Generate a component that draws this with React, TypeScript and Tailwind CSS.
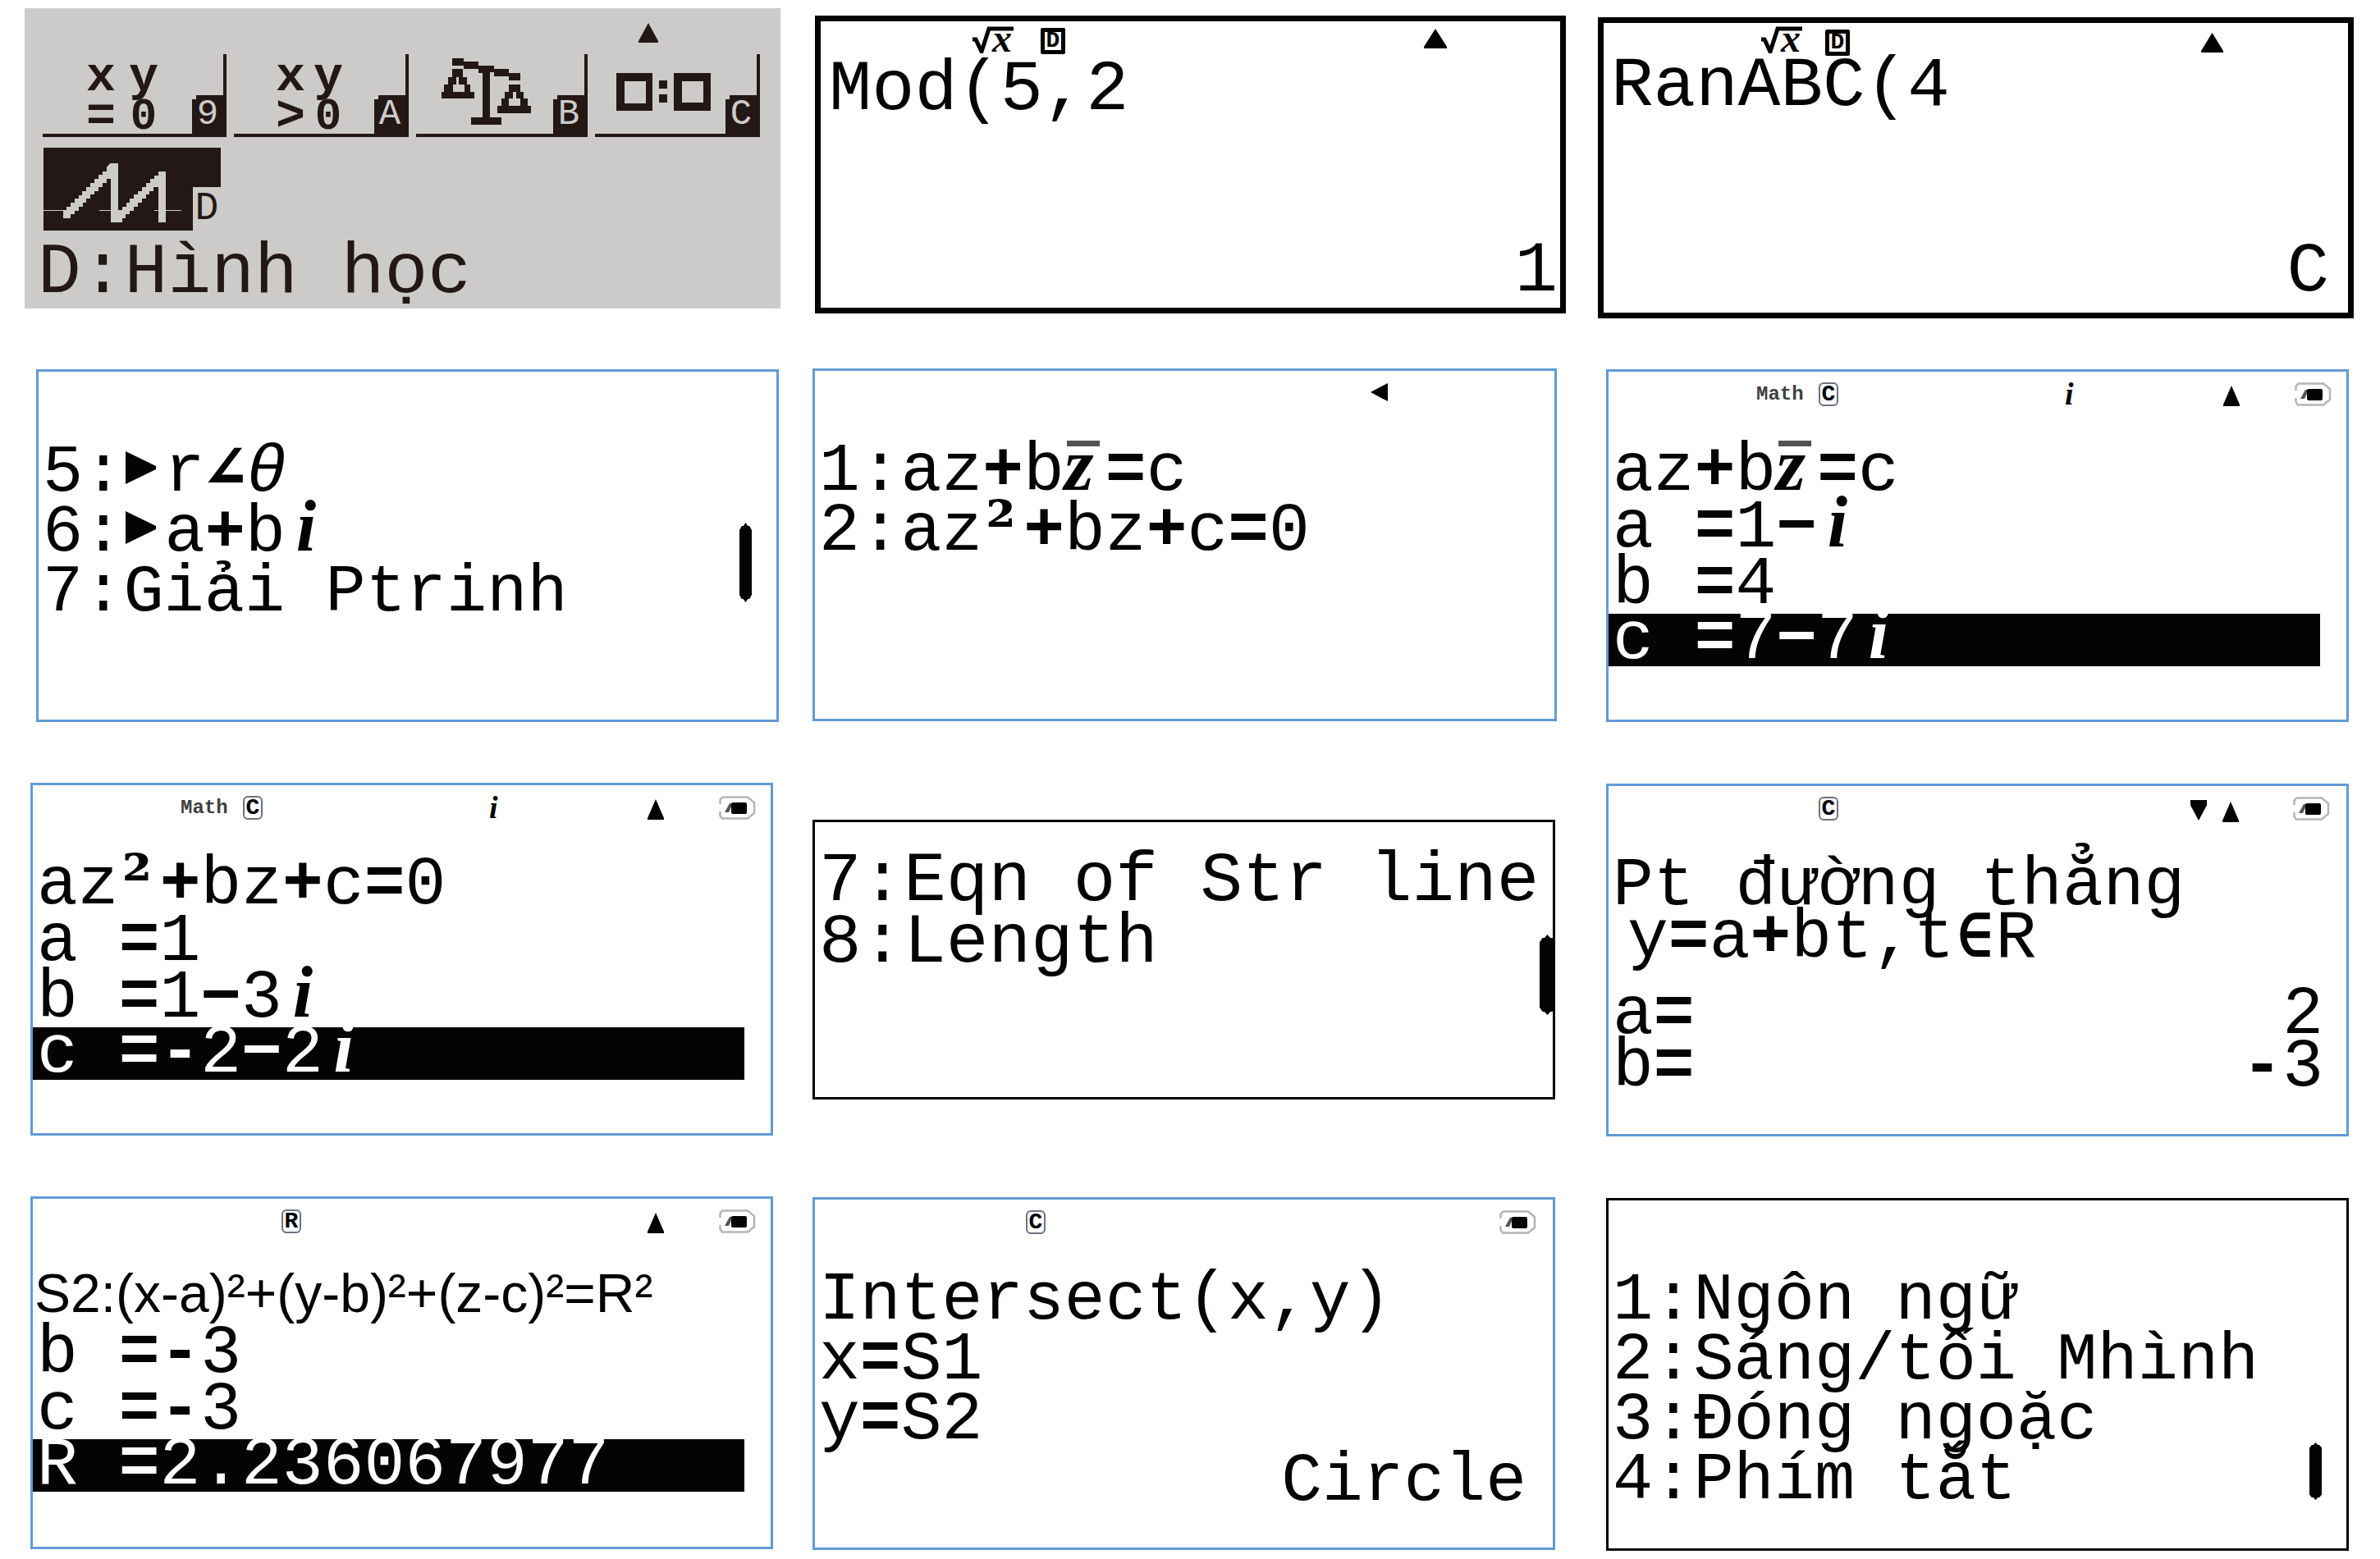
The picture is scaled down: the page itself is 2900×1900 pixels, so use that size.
import type { ReactNode } from "react";

const MONO = "font-['Liberation_Mono','DejaVu_Sans_Mono',monospace]";

function Up({ className = "h-[25px] w-[20px]" }: { className?: string }) {
  return (
    <svg viewBox="0 0 22 24" preserveAspectRatio="none" className={className} fill="currentColor" aria-hidden="true">
      <path d="M11 0 L22 22 V24 H0 V22 Z" />
    </svg>
  );
}

function Down() {
  return (
    <svg viewBox="0 0 22 24" preserveAspectRatio="none" className="h-[25px] w-[20px]" fill="currentColor" aria-hidden="true">
      <path d="M0 0 H22 V6 L11 24 L0 6 Z" />
    </svg>
  );
}

function Root() {
  return (
    <span className="flex h-[34px] w-[51px] items-end">
      <svg viewBox="0 0 51 33" className="absolute h-[33px] w-[51px] self-start" fill="none" stroke="currentColor" aria-hidden="true">
        <path d="M1 16 L5 16 L12 31 L21 3 H51" strokeWidth="5" />
      </svg>
      <span className="ml-[25px] font-['Liberation_Serif',serif] text-[48px] leading-[38px] font-bold italic">x</span>
    </span>
  );
}

function Mode({ className, children }: { className: string; children: string }) {
  return (
    <span className={`flex h-[32px] w-[30px] items-center justify-center rounded-[2px] border-[5px] border-black bg-white font-['Liberation_Mono',monospace] text-[28px] leading-[22px] font-bold text-black ${className}`}>
      {children}
    </span>
  );
}

function SmallMode({ children }: { children: string }) {
  return (
    <span className="flex h-[29px] w-[24px] items-center justify-center rounded-[6px] border-2 border-gray-500 font-['Liberation_Mono',monospace] text-[28px] leading-[26px] font-bold text-black">
      {children}
    </span>
  );
}

function Battery() {
  return (
    <svg viewBox="0 0 45 29" className="h-[29px] w-[45px]" aria-hidden="true">
      <path d="M4 1.5 H35 L43 8 V21 L35 27.5 H4 L1.5 24 V19 M1.5 10 V5 L4 1.5" fill="none" stroke="#b5b5b5" strokeWidth="2.5" />
      <path d="M7 20 L13 9 H17 L12 20 Z" fill="#555" />
      <rect x="15" y="8" width="19" height="14" rx="2" fill="#060304" />
    </svg>
  );
}

function Imag() {
  return <span className="inline-block w-[50px] text-center font-['Liberation_Serif',serif] text-[88px] leading-[40px] font-bold italic">i</span>;
}

function Play() {
  return (
    <svg viewBox="0 0 50 40" className="inline-block h-[40px] w-[50px] align-[8px]" fill="currentColor" aria-hidden="true">
      <path d="M3 0 L40 18 V22 L3 40 Z" />
    </svg>
  );
}

function ZBar() {
  return (
    <span className="relative inline-block w-[50px] font-['Liberation_Serif',serif] text-[92px] leading-[40px] font-bold italic">
      z<span className="absolute top-[-9px] left-[3px] h-[7px] w-[40px] bg-neutral-600" />
    </span>
  );
}

/* Operators and superscripts are heavier than letters on the display. */
function Ops({ t }: { t: string }) {
  return (
    <>
      {t.split(/([=+−-]+|²)/).map((s, i) => {
        if (s === "²") {
          return (
            <b key={i} className="inline-block w-[50px] pl-[4px] font-['DejaVu_Serif',serif] leading-[40px]">
              {s}
            </b>
          );
        }
        return i % 2 ? <b key={i}>{s}</b> : s;
      })}
    </>
  );
}

function Row({ children, className = "h-[73px] leading-[73px]" }: { children: ReactNode; className?: string }) {
  return <p className={`px-[5px] whitespace-pre ${className}`}>{children}</p>;
}

function Selected({ children }: { children: ReactNode }) {
  return <p className="mr-[32px] h-[64px] bg-[#060304] px-[5px] leading-[64px] whitespace-pre text-white">{children}</p>;
}

function Screen({ children, className = "" }: { children: ReactNode; className?: string }) {
  return <section className={`relative ${MONO} flex flex-col bg-white text-[#060304] ${className}`}>{children}</section>;
}

const BLUE = "min-h-[430px] border-[3px] border-[#629bd5]";
const MID = "h-[69px] leading-[69px]";

function Status({ children, className = "h-[60px] items-center" }: { children?: ReactNode; className?: string }) {
  return <div className={`flex w-full shrink-0 ${className}`}>{children}</div>;
}

function MathStatus() {
  return (
    <Status className="h-[88px] items-start pt-[13px] pl-[180px]">
      <span className="w-[58px] font-['Liberation_Mono',monospace] text-[24px] leading-[29px] font-bold text-neutral-700">Math</span>
      <span className="ml-[18px]"><SmallMode>C</SmallMode></span>
      <span className="ml-[276px] w-[15px] font-['Liberation_Serif',serif] text-[38px] leading-[29px] font-bold italic">i</span>
      <Up className="mt-[4px] ml-[178px] h-[25px] w-[20px]" />
      <span className="ml-[67px]"><Battery /></span>
    </Status>
  );
}

function Thumb({ className }: { className: string }) {
  return (
    <svg viewBox="0 0 16 96" preserveAspectRatio="none" className={`absolute ${className}`} fill="currentColor" aria-hidden="true">
      <path d="M8 0 L11 4 H13 L16 9 V87 L13 92 H11 L8 96 L5 92 H3 L0 87 V9 L3 4 H5 Z" />
    </svg>
  );
}

function Tile({ badge, className, children }: { badge: string; className: string; children: ReactNode }) {
  return (
    <button type="button" className={`relative h-[101px] border-r-[4px] border-b-[4px] border-[#231815] text-left ${className}`}>
      {children}
      <span className="absolute right-0 bottom-0 flex h-[47px] w-[38px] items-center justify-center bg-[#231815] text-[44px] leading-[47px] text-[#cccbc9]">
        {badge}
        <span className="absolute top-0 left-0 h-[5px] w-[5px] bg-[#cccbc9]" />
      </span>
    </button>
  );
}

function Formula({ sign, className }: { sign: string; className: string }) {
  return (
    <span className={`grid grid-cols-2 text-center text-[60px] leading-[56px] font-bold ${className}`}>
      <span>x</span>
      <span>y</span>
      <span className="leading-[41px]">{sign}</span>
      <span className="text-[54px] leading-[41px]">0</span>
    </span>
  );
}

function MenuScreen() {
  return (
    <Screen className="min-h-[366px] bg-[#cccbc9]! text-[#231815]">
      <Status className="h-[56px] items-center pl-[748px]">
        <Up className="mt-[4px] h-[24px] w-[24px]" />
      </Status>
      <div className="flex gap-[9px] pl-[22px]">
        <Tile badge="9" className="w-[224px]">
          <Formula sign="=" className="ml-[45px] w-[104px]" />
        </Tile>
        <Tile badge="A" className="w-[213px]">
          <Formula sign=">" className="ml-[46px] w-[92px]" />
        </Tile>
        <Tile badge="B" className="w-[209px]">
          <svg viewBox="820 198 333 294" preserveAspectRatio="none" className="absolute inset-0 h-full w-full" fill="currentColor" shapeRendering="crispEdges" aria-hidden="true">
            <path d="M892 213h23v12h29v15h30v12h30v15h22v27h-22v-15h-29v-13h-8v166h22v27h-60v-27h23V267h-8v-15h-29v-12h-23z" />
            <path fillRule="evenodd" d="M891 252h22v30h8v27h7v27h8v27h-66v-27h6v-27h8v-27h7zM899 282v27h-6v27h23v-27h-11v-27z" />
            <path fillRule="evenodd" d="M1004 309h22v27h7v27h8v27h6v27h-66v-27h8v-27h7v-27h8zM1011 336v27h-7v27h22v-27h-8v-27z" />
          </svg>
        </Tile>
        <Tile badge="C" className="w-[201px]">
          <svg viewBox="1174 198 320 294" preserveAspectRatio="none" className="absolute inset-0 h-full w-full" fill="currentColor" shapeRendering="crispEdges" aria-hidden="true">
            <path fillRule="evenodd" d="M1216 267h72v141h-72zM1232 297v84h42v-84zM1330 267h73v141h-73zM1346 297v81h43v-81z" />
            <path d="M1301 294h16v30h-16zM1301 348h16v30h-16z" />
          </svg>
        </Tile>
      </div>
      <button type="button" className="relative mt-[13px] ml-[23px] h-[101px] w-[216px] bg-[#231815]">
        <svg viewBox="86 540 349 303" preserveAspectRatio="none" className="absolute inset-0 h-full w-full" fill="#cccbc9" shapeRendering="crispEdges" aria-hidden="true">
          <path d="M86 768h40v3h-40zM196 768h45v3h-45zM304 768h53v3h-53z" />
          <path d="M218 597h15v171h8v-13h8v-14h7v-16h8v-14h8v-13h8v-14h8v-15h8v-15h8v-13h8v-14h15v186h-15V684h-10v15h-8v13h-6v14h-8v15h-8v15h-8v14h-8v14h-8v14h-7v15h-23V654h-8v16h-8v14h-8v15h-8v13h-8v14h-8v15h-7v15h-8v14h-7v13h-8v15h-15v-30h7v-13h8v-14h8v-15h8v-13h6v-14h8v-16h8v-14h8v-14h8v-15h8v-14h8v-16z" />
        </svg>
        <span className="absolute right-0 bottom-0 flex h-[53px] w-[34px] items-center justify-center bg-[#cccbc9] text-[48px] leading-[53px] text-[#231815]">D</span>
      </button>
      <p className="mt-[9px] pl-[16px] text-[88px] leading-[86px]">D:Hình học</p>
    </Screen>
  );
}

export default function App() {
  return (
    <main className="grid min-h-screen w-full grid-cols-[97fr_96fr_97fr] bg-white pb-[10px]">
      <div className="h-[430px] pt-[10px] pr-[19px] pl-[30px]">
        <MenuScreen />
      </div>

      <div className="pt-[19px] pr-[22px] pl-[23px]">
        <Screen className="min-h-[363px] border-[7px] border-[#060304] text-[87px]">
          <Status className="h-[44px] items-start pt-[6px] pl-[184px]">
            <Root />
            <Mode className="mt-[2px] ml-[33px]">D</Mode>
            <Up className="mt-[3px] ml-[437px] h-[24px] w-[28px]" />
          </Status>
          <p className="pl-[10px] leading-[80px]">Mod(5,2</p>
          <p className="mt-auto mb-[4px] pr-[3px] text-right leading-[80px]">1</p>
        </Screen>
      </div>

      <div className="pt-[21px] pr-[32px] pl-[17px]">
        <Screen className="min-h-[367px] border-[7px] border-[#060304] text-[86px]">
          <Status className="h-[37px] items-start pt-[4px] pl-[191px]">
            <Root />
            <Mode className="mt-[4px] ml-[28px]">D</Mode>
            <Up className="mt-[8px] ml-[428px] h-[24px] w-[27px]" />
          </Status>
          <p className="pl-[9px] leading-[80px]">RanABC(4</p>
          <p className="mt-auto mb-[10px] pr-[23px] text-right leading-[80px]">C</p>
        </Screen>
      </div>

      <div className="h-[500px] pt-[20px] pr-[21px] pl-[44px]">
        <Screen className={`${BLUE} pt-[87px] text-[82px]`}>
          <Row>
            5:<Play />r<span className="inline-block w-[50px] text-center font-['DejaVu_Sans_Mono',monospace] leading-[40px] font-bold">∠</span>
            <span className="italic">θ</span>
          </Row>
          <Row>6:<Play /><Ops t="a+b" /><Imag /></Row>
          <Row>7:Giải Ptrinh</Row>
          <Thumb className="top-[184px] right-[30px] h-[97px] w-[15px]" />
        </Screen>
      </div>

      <div className="pt-[19px] pr-[33px] pl-[20px]">
        <Screen className={`${BLUE} text-[83px]`}>
          <Status className="h-[87px] items-start pt-[15px] pl-[677px]">
            <svg viewBox="0 0 21 22" className="h-[22px] w-[21px]" fill="currentColor" aria-hidden="true">
              <path d="M21 0 V22 L13 18 L0 11 L13 4 Z" />
            </svg>
          </Status>
          <Row><Ops t="1:az+b" /><ZBar /><Ops t="=c" /></Row>
          <Row><Ops t="2:az²+bz+c=0" /></Row>
        </Screen>
      </div>

      <div className="pt-[20px] pr-[38px] pl-[27px]">
        <Screen className={`${BLUE} text-[83px]`}>
          <MathStatus />
          <Row className={MID}><Ops t="az+b" /><ZBar /><Ops t="=c" /></Row>
          <Row className={MID}><Ops t="a =1−" /><Imag /></Row>
          <Row className={MID}><Ops t="b =4" /></Row>
          <Selected><Ops t="c =7−7" /><Imag /></Selected>
        </Screen>
      </div>

      <div className="h-[500px] pt-[24px] pr-[28px] pl-[37px]">
        <Screen className={`${BLUE} text-[83px]`}>
          <MathStatus />
          <Row className={MID}><Ops t="az²+bz+c=0" /></Row>
          <Row className={MID}><Ops t="a =1" /></Row>
          <Row className={MID}><Ops t="b =1−3" /><Imag /></Row>
          <Selected><Ops t="c =-2−2" /><Imag /></Selected>
        </Screen>
      </div>

      <div className="pt-[69px] pr-[35px] pl-[20px]">
        <Screen className="min-h-[341px] border-[3px] border-[#060304] pt-[35px] text-[86px]">
          <Row className="leading-[75px]">7:Eqn of Str line</Row>
          <Row className="leading-[75px]">8:Length</Row>
          <Thumb className="top-[137px] right-[-3px] h-[98px] w-[19px]" />
        </Screen>
      </div>

      <div className="pt-[25px] pr-[38px] pl-[27px]">
        <Screen className={`${BLUE} text-[83px]`}>
          <Status className="h-[90px] items-start pt-[13px] pl-[256px]">
            <SmallMode>C</SmallMode>
            <span className="ml-[429px] pt-[4px]"><Down /></span>
            <Up className="mt-[6px] ml-[19px] h-[25px] w-[20px]" />
            <span className="ml-[66px]"><Battery /></span>
          </Status>
          <Row className="h-[64px] leading-[64px]">Pt đường thẳng</Row>
          <Row className="h-[64px] pl-[23px] leading-[64px]">
            <Ops t="y=a+bt,t" />
            <span className="inline-block w-[50px] text-center font-['DejaVu_Sans_Mono',monospace] text-[72px] leading-[40px] font-bold">∈</span>R
          </Row>
          <dl className="mt-[29px] pr-[28px] pl-[5px] leading-[64px]">
            <div className="flex h-[64px] justify-between"><dt><Ops t="a=" /></dt><dd>2</dd></div>
            <div className="flex h-[64px] justify-between"><dt><Ops t="b=" /></dt><dd><Ops t="-3" /></dd></div>
          </dl>
        </Screen>
      </div>

      <div className="pt-[28px] pr-[28px] pl-[37px]">
        <Screen className={`${BLUE} text-[83px]`}>
          <Status className="h-[75px] items-start pt-[13px] pl-[303px]">
            <SmallMode>R</SmallMode>
            <Up className="mt-[4px] ml-[422px] h-[25px] w-[20px]" />
            <span className="ml-[67px]"><Battery /></span>
          </Status>
          <p className="h-[80px] pl-[2px] font-['Liberation_Sans',sans-serif] text-[66px] leading-[80px] whitespace-pre">S2:(x-a)²+(y-b)²+(z-c)²=R²</p>
          <Row className={MID}><Ops t="b =-3" /></Row>
          <Row className={MID}><Ops t="c =-3" /></Row>
          <Selected><Ops t="R =2.236067977" /></Selected>
        </Screen>
      </div>

      <div className="pt-[29px] pr-[35px] pl-[20px]">
        <Screen className={`${BLUE} text-[83px]`}>
          <Status className="h-[87px] items-start pt-[13px] pl-[257px]">
            <SmallMode>C</SmallMode>
            <span className="ml-[553px]"><Battery /></span>
          </Status>
          <Row>Intersect(x,y)</Row>
          <Row><Ops t="x=S1" /></Row>
          <Row><Ops t="y=S2" /></Row>
          <p className="mt-[2px] pr-[32px] text-right leading-[73px]">Circle</p>
        </Screen>
      </div>

      <div className="pt-[30px] pr-[38px] pl-[27px]">
        <Screen className="min-h-[430px] border-[3px] border-[#060304] pt-[86px] text-[82px]">
          <Row>1:Ngôn ngữ</Row>
          <Row>2:Sáng/tối Mhình</Row>
          <Row>3:Đóng ngoặc</Row>
          <Row>4:Phím tắt</Row>
          <Thumb className="top-[295px] right-[30px] h-[70px] w-[15px]" />
        </Screen>
      </div>
    </main>
  );
}
